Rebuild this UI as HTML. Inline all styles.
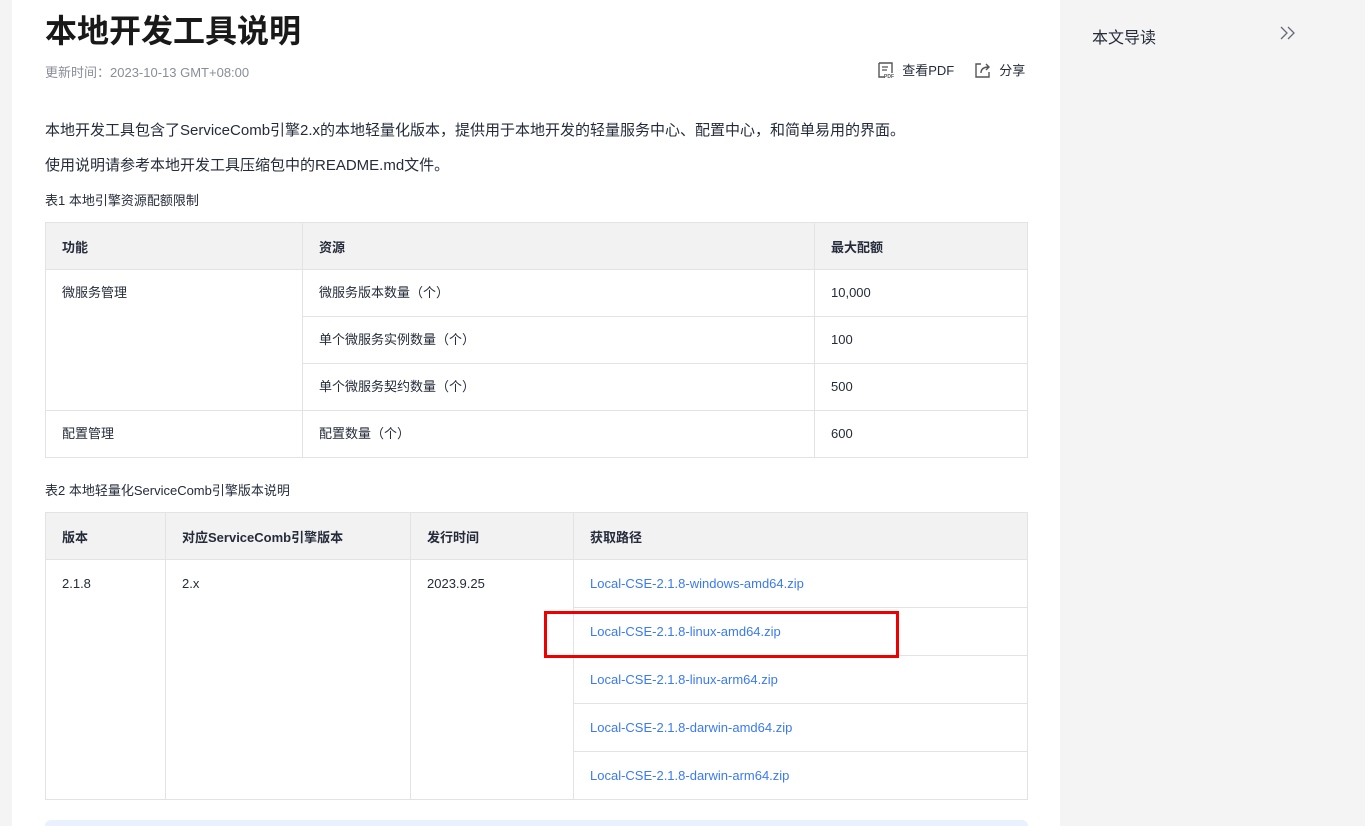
<!DOCTYPE html>
<html><head><meta charset="utf-8"><style>
*{margin:0;padding:0;box-sizing:border-box}
html,body{width:1365px;height:826px;overflow:hidden}
body{background:#f4f4f4;font-family:"Liberation Sans","Noto Sans CJK SC",sans-serif;color:#252b3a;position:relative}
.main{position:absolute;left:12px;top:0;width:1048px;height:826px;background:#fff}
.a{position:absolute;white-space:nowrap}
table{position:absolute;border-collapse:collapse;font-size:13px;color:#252b3a}
td,th{border:1px solid #e3e3e3;padding:0 16px;text-align:left;vertical-align:top}
th{background:#f2f2f2;font-weight:bold;height:47px;vertical-align:middle}
td{line-height:47px}
.t1 td{line-height:46px}
a{color:#3a7af0;text-decoration:none}
</style></head><body>
<div class="main"></div>
<div class="a" style="left:45px;top:6px;font-size:32px;font-weight:bold;color:#191919">本地开发工具说明</div>
<div class="a" style="left:45px;top:62px;font-size:13px;color:#8a8e99">更新时间：2023-10-13 GMT+08:00</div>
<div class="a" style="left:877px;top:60px;font-size:13px;color:#252b3a">
<svg width="18" height="18" viewBox="0 0 18 18" style="vertical-align:-4px"><path d="M2 2h13v10M2 2v14h6" fill="none" stroke="#555" stroke-width="1.4"/><path d="M5 6h6M5 9h5" stroke="#555" stroke-width="1.2"/><text x="7" y="17" font-size="5" font-weight="bold" fill="#555" font-family="Liberation Sans">PDF</text></svg>&nbsp; 查看PDF</div>
<div class="a" style="left:974px;top:60px;font-size:13px;color:#252b3a">
<svg width="18" height="18" viewBox="0 0 18 18" style="vertical-align:-4px"><path d="M7 3H2v13h13v-5" fill="none" stroke="#555" stroke-width="1.4"/><path d="M7 12c0-4 3-6 8-6M12 3l3 3-3 3" fill="none" stroke="#555" stroke-width="1.4"/></svg>&nbsp; 分享</div>
<div class="a" style="left:1092px;top:24px;font-size:16px;color:#252b3a">本文导读</div>
<svg class="a" style="left:1279px;top:25px" width="18" height="16" viewBox="0 0 18 16"><path d="M2 2l6 6-6 6M9 2l6 6-6 6" fill="none" stroke="#666a75" stroke-width="1.3"/></svg>
<div class="a" style="left:45px;top:119px;font-size:15px">本地开发工具包含了ServiceComb引擎2.x的本地轻量化版本，提供用于本地开发的轻量服务中心、配置中心，和简单易用的界面。</div>
<div class="a" style="left:45px;top:154px;font-size:15px">使用说明请参考本地开发工具压缩包中的README.md文件。</div>
<div class="a" style="left:45px;top:190px;font-size:13px">表1 本地引擎资源配额限制</div>
<table class="t1" style="left:45px;top:222px;width:983px">
<tr><th style="width:257px">功能</th><th style="width:512px">资源</th><th>最大配额</th></tr>
<tr><td rowspan="3">微服务管理</td><td>微服务版本数量（个）</td><td>10,000</td></tr>
<tr><td>单个微服务实例数量（个）</td><td>100</td></tr>
<tr><td>单个微服务契约数量（个）</td><td>500</td></tr>
<tr><td>配置管理</td><td>配置数量（个）</td><td>600</td></tr>
</table>
<div class="a" style="left:45px;top:480px;font-size:13px">表2 本地轻量化ServiceComb引擎版本说明</div>
<table style="left:45px;top:512px;width:983px">
<tr><th style="width:120px">版本</th><th style="width:245px">对应ServiceComb引擎版本</th><th style="width:163px">发行时间</th><th>获取路径</th></tr>
<tr><td rowspan="5">2.1.8</td><td rowspan="5">2.x</td><td rowspan="5">2023.9.25</td><td><a>Local-CSE-2.1.8-windows-amd64.zip</a></td></tr>
<tr><td><a>Local-CSE-2.1.8-linux-amd64.zip</a></td></tr>
<tr><td><a>Local-CSE-2.1.8-linux-arm64.zip</a></td></tr>
<tr><td><a>Local-CSE-2.1.8-darwin-amd64.zip</a></td></tr>
<tr><td><a>Local-CSE-2.1.8-darwin-arm64.zip</a></td></tr>
</table>
<div class="a" style="left:544px;top:611px;width:355px;height:47px;border:3px solid #e00"></div>
<div class="a" style="left:45px;top:820px;width:983px;height:20px;background:#e8f1fd;border-radius:6px"></div>
</body></html>
